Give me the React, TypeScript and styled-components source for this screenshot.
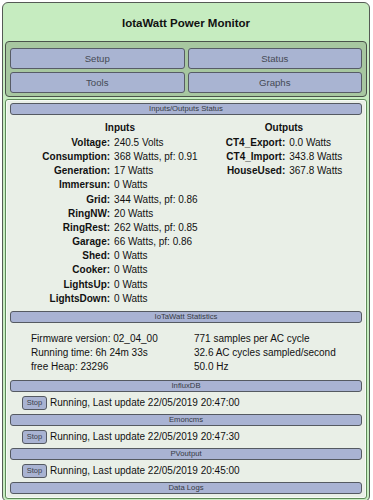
import styled, { createGlobalStyle } from 'styled-components';

const GlobalStyle = createGlobalStyle`
    html, body {
        margin: 0;
        padding: 0;
        background: #ffffff;
        font-family: "Liberation Sans", Arial, sans-serif;
    }
`;

const inputs: [string, string][] = [
    ['Voltage', '240.5 Volts'],
    ['Consumption', '368 Watts, pf: 0.91'],
    ['Generation', '17 Watts'],
    ['Immersun', '0 Watts'],
    ['Grid', '344 Watts, pf: 0.86'],
    ['RingNW', '20 Watts'],
    ['RingRest', '262 Watts, pf: 0.85'],
    ['Garage', '66 Watts, pf: 0.86'],
    ['Shed', '0 Watts'],
    ['Cooker', '0 Watts'],
    ['LightsUp', '0 Watts'],
    ['LightsDown', '0 Watts'],
];

const outputs: [string, string][] = [
    ['CT4_Export', '0.0 Watts'],
    ['CT4_Import', '343.8 Watts'],
    ['HouseUsed', '367.8 Watts'],
];

const services = [
    { name: 'InfluxDB', status: 'Running, Last update 22/05/2019 20:47:00' },
    { name: 'Emoncms', status: 'Running, Last update 22/05/2019 20:47:30' },
    { name: 'PVoutput', status: 'Running, Last update 22/05/2019 20:45:00' },
];

const App = () => {
    return (
        <>
            <GlobalStyle />
            <Page>
                <Title>IotaWatt Power Monitor</Title>
                <Nav>
                    <NavButton>Setup</NavButton>
                    <NavButton>Status</NavButton>
                    <NavButton>Tools</NavButton>
                    <NavButton>Graphs</NavButton>
                </Nav>
                <Panel>
                    <SectionBar>Inputs/Outputs Status</SectionBar>
                    <IOArea>
                        <IOColumn $width={200}>
                            <ColumnHeading>Inputs</ColumnHeading>
                            <ValueTable>
                                <tbody>
                                    {inputs.map(([label, value]) => (
                                        <tr key={label}>
                                            <Label>{label}:</Label>
                                            <Value>{value}</Value>
                                        </tr>
                                    ))}
                                </tbody>
                            </ValueTable>
                        </IOColumn>
                        <IOColumn $width={120}>
                            <ColumnHeading>Outputs</ColumnHeading>
                            <ValueTable>
                                <tbody>
                                    {outputs.map(([label, value]) => (
                                        <tr key={label}>
                                            <Label>{label}:</Label>
                                            <Value>{value}</Value>
                                        </tr>
                                    ))}
                                </tbody>
                            </ValueTable>
                        </IOColumn>
                    </IOArea>
                    <SectionBar>IoTaWatt Statistics</SectionBar>
                    <Stats>
                        <span>Firmware version: 02_04_00</span>
                        <span>771 samples per AC cycle</span>
                        <span>Running time: 6h 24m 33s</span>
                        <span>32.6 AC cycles sampled/second</span>
                        <span>free Heap: 23296</span>
                        <span>50.0 Hz</span>
                    </Stats>
                    {services.map((s) => (
                        <div key={s.name}>
                            <SectionBar>{s.name}</SectionBar>
                            <ServiceRow>
                                <StopButton>Stop</StopButton>
                                <span>{s.status}</span>
                            </ServiceRow>
                        </div>
                    ))}
                    <SectionBar>Data Logs</SectionBar>
                </Panel>
            </Page>
        </>
    );
};

const Page = styled.div`
    margin: 2px 3px 2px 2px;
    width: 368px;
    box-sizing: border-box;
    background: #c6ecc0;
    border: 1px solid #555a55;
    border-radius: 6px;
    padding: 0 2px 2px 2px;
`;

const Title = styled.div`
    height: 38px;
    line-height: 40px;
    text-align: center;
    font-size: 11.5px;
    font-weight: bold;
    color: #111;
`;

const Nav = styled.div`
    display: grid;
    grid-template-columns: 1fr 1fr;
    gap: 3px;
    padding: 6px 4px 3px 4px;
    background: #a7c7a0;
    border: 1px solid #4a524a;
    border-radius: 4px;
`;

const NavButton = styled.div`
    height: 19px;
    line-height: 19px;
    text-align: center;
    font-size: 9.6px;
    color: #454a55;
    background: #a9b4d2;
    border: 1px solid #575c66;
    border-radius: 3px;
`;

const Panel = styled.div`
    margin-top: 2px;
    padding: 3px 4px 4px 4px;
    background: #e9efe7;
    border: 1px solid #5d8a58;
    box-shadow: inset 0 0 0 1px #f6faf5;
    border-radius: 3px;
`;

const SectionBar = styled.div`
    height: 10px;
    line-height: 10px;
    text-align: center;
    font-size: 7.7px;
    color: #363a44;
    background: #a9b3d3;
    border: 1px solid #555a62;
    border-radius: 3px;
`;

const IOArea = styled.div`
    display: flex;
    gap: 4px;
    padding: 6px 0 5px 10px;
`;

const IOColumn = styled.div<{ $width: number }>`
    width: ${(p) => p.$width}px;
    display: flex;
    flex-direction: column;
    align-items: center;
`;

const ColumnHeading = styled.div`
    font-size: 10px;
    font-weight: bold;
    line-height: 14px;
    color: #111;
    margin-bottom: 1px;
`;

const ValueTable = styled.table`
    border-collapse: collapse;
    font-size: 10px;
    color: #111;
    white-space: nowrap;
    td {
        padding: 0;
        line-height: 14.15px;
    }
`;

const Label = styled.td`
    text-align: right;
    font-weight: bold;
    padding-right: 4px !important;
`;

const Value = styled.td`
    text-align: left;
`;

const Stats = styled.div`
    display: grid;
    grid-template-columns: 163px 1fr;
    padding: 9px 0 5px 21px;
    font-size: 10px;
    line-height: 14.3px;
    color: #111;
    white-space: nowrap;
`;

const ServiceRow = styled.div`
    display: flex;
    align-items: center;
    gap: 3px;
    height: 22px;
    padding-left: 12px;
    font-size: 10px;
    color: #111;
    white-space: nowrap;
`;

const StopButton = styled.div`
    width: 23px;
    height: 12px;
    line-height: 12px;
    text-align: center;
    font-size: 7.5px;
    color: #3a3f4a;
    background: #a9b3d2;
    border: 1px solid #555a62;
    border-radius: 3px;
`;

export default App;
